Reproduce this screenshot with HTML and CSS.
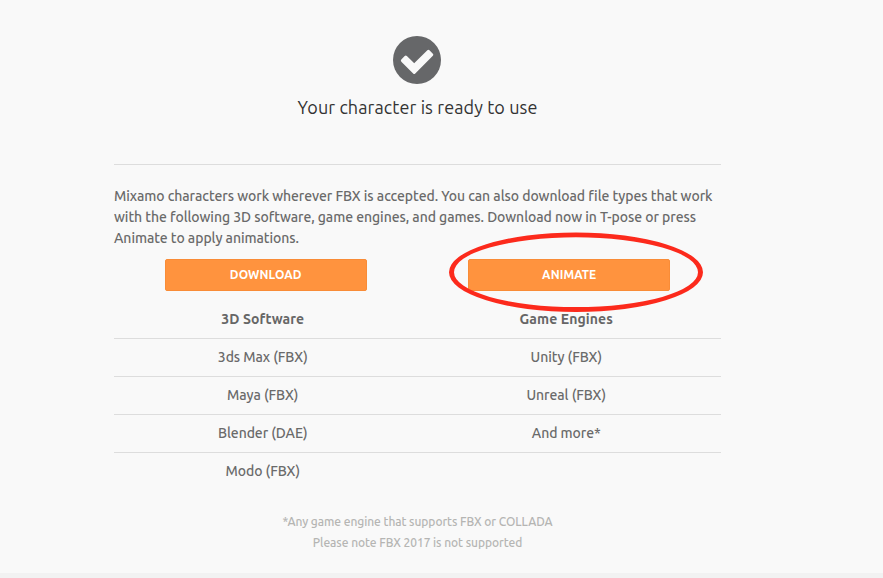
FILE: index.html
```html
<!DOCTYPE html>
<html lang="en">
<head>
  <meta charset="UTF-8">
  <title>Your character is ready to use</title>
  <meta name="viewport" content="width=device-width, initial-scale=1.0">
  <link rel="stylesheet" href="styles.css">
</head>
<body>

<div class="modal-body">
  <div class="content">
    <div class="ready">
      <svg class="check" viewBox="0 0 48 48" aria-hidden="true">
        <circle cx="24" cy="24" r="24" fill="#666769"/>
        <path d="M12.8 21 L21.2 29.4 L35.4 15.4 L38.8 18.8 L21.2 36.4 L9.4 24.6 Z" fill="#f9f9f9" stroke="#f9f9f9" stroke-width="3" stroke-linejoin="round"/>
      </svg>
      <h2>Your character is ready to use</h2>
    </div>

    <p class="intro">
      Mixamo characters work wherever FBX is accepted. You can also download file types that work<br>
      with the following 3D software, game engines, and games. Download now in T-pose or press<br>
      Animate to apply animations.
    </p>

    <div class="actions">
      <button class="btn">DOWNLOAD</button>
      <div class="marked">
        <button class="btn">ANIMATE</button>
        <svg class="ring" viewBox="0 0 256 82" aria-hidden="true">
          <path fill="#fc2a1c" fill-rule="evenodd" d="M1 40.2 A127 39.7 0 0 1 255 40.2 A127 39.7 0 0 1 1 40.2 Z M6 40.2 A122 34.9 0 0 0 250 40.2 A122 34.9 0 0 0 6 40.2 Z"/>
        </svg>
      </div>
    </div>

    <div class="formats">
      <div class="row head"><div>3D Software</div><div>Game Engines</div></div>
      <div class="row"><div>3ds Max (FBX)</div><div>Unity (FBX)</div></div>
      <div class="row"><div>Maya (FBX)</div><div>Unreal (FBX)</div></div>
      <div class="row"><div>Blender (DAE)</div><div>And more*</div></div>
      <div class="row"><div>Modo (FBX)</div><div></div></div>
    </div>

    <div class="notes">
      <p>*Any game engine that supports FBX or COLLADA</p>
      <p>Please note FBX 2017 is not supported</p>
    </div>
  </div>
</div>
<div class="modal-footer"></div>

</body>
</html>
```

FILE: styles.css
```css
* {
  box-sizing: border-box;
  margin: 0;
  padding: 0;
}

body {
  height: 578px;
  overflow: hidden;
  background: #f9f9f9;
  color: #6a6a6a;
  font-family: Ubuntu, "Noto Sans", sans-serif;
  font-size: 14px;
  font-weight: 500;
  line-height: 21px;
  letter-spacing: -0.06px;
}

.modal-body {
  height: 573px;
  padding: 36px 0 0 114px;
}

.modal-footer {
  height: 5px;
  background: #f2f2f2;
}

.content {
  width: 607px;
}

.ready {
  height: 129px;
  border-bottom: 1px solid #ddd;
  text-align: center;
}

.check {
  display: block;
  width: 48px;
  height: 48px;
  margin: 0 0 0 279px;
}

.ready h2 {
  margin-top: 11px;
  color: #333;
  font-size: 18px;
  font-weight: 400;
  line-height: 25px;
  letter-spacing: 0.1px;
}

.intro {
  margin-top: 21px;
  white-space: nowrap;
}

.actions {
  display: grid;
  grid-template-columns: 1fr 1fr;
  justify-items: center;
  margin-top: 10px;
}

.marked {
  position: relative;
}

.btn {
  display: block;
  width: 202px;
  height: 32px;
  padding-bottom: 2px;
  border: 1px solid #f98c37;
  border-radius: 2px;
  background: #ff933e;
  color: #fff;
  font-family: inherit;
  font-size: 12px;
  font-weight: 700;
  letter-spacing: 0.1px;
}

.ring {
  position: absolute;
  left: -20px;
  top: -27px;
  width: 256px;
  height: 82px;
}

.formats {
  margin-top: 10px;
  text-align: center;
}

.row {
  display: grid;
  grid-template-columns: 1fr 1fr;
  height: 38px;
  border-bottom: 1px solid #ddd;
  line-height: 37px;
}

.row > div {
  padding-right: 6px;
}

.row:last-child {
  border-bottom: none;
}

.head {
  color: #666;
  font-weight: 700;
  letter-spacing: 0.1px;
}

.notes {
  margin-top: 20px;
  color: #b5b5b3;
  font-size: 12px;
  text-align: center;
}
```
